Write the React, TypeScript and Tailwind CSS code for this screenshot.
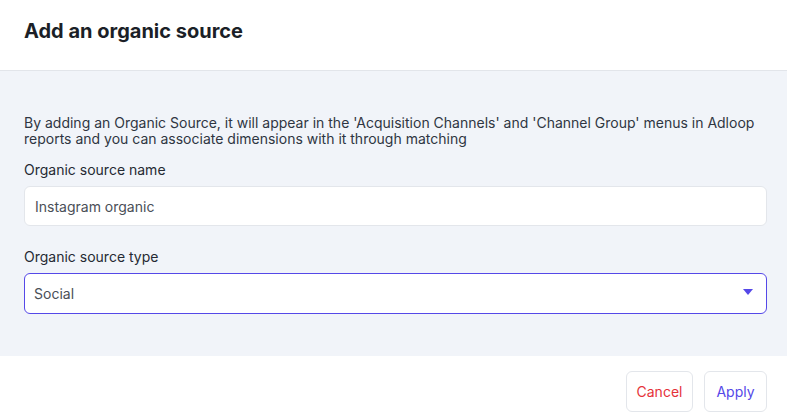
import { useState } from 'react'

export default function App() {
  const [name, setName] = useState('Instagram organic')
  const [type, setType] = useState('Social')

  return (
    <div className="w-[787px] h-[419px] bg-white font-['Inter',sans-serif] overflow-hidden">
      <div className="h-[71px] border-b border-[#e2e5ea] pl-6 pr-5 pt-[17px]">
        <h2 className="text-[20px] leading-7 font-bold text-[#1b1f27]">Add an organic source</h2>
      </div>

      <div className="bg-[#f1f4f9] pl-6 pr-5 pt-[44px] pb-[42px]">
        <p className="text-[14px] leading-4 text-[#2f3642]">
          By adding an Organic Source, it will appear in the 'Acquisition Channels' and 'Channel Group' menus in Adloop
          reports and you can associate dimensions with it through matching
        </p>

        <label className="mt-[13px] block text-[14px] leading-5 text-[#252a33]">Organic source name</label>
        <input
          value={name}
          onChange={(e) => setName(e.target.value)}
          className="mt-[6px] block h-[40px] w-full rounded-md border border-[#e3e6eb] bg-white px-[10px] text-[14px] text-[#4a4f57] outline-none"
        />

        <label className="mt-[21px] block text-[14px] leading-5 text-[#252a33]">Organic source type</label>
        <div className="relative mt-[6px]">
          <select
            value={type}
            onChange={(e) => setType(e.target.value)}
            className="block h-[41px] w-full appearance-none rounded-md border border-[#5548e8] bg-white px-[9px] text-[14px] text-[#4a4f57] outline-none"
          >
            <option>Social</option>
            <option>Search</option>
            <option>Email</option>
          </select>
          <svg
            className="pointer-events-none absolute right-[14px] top-[16px]"
            width="10"
            height="6"
            viewBox="0 0 10 6"
          >
            <path d="M0 0h10L5 6z" fill="#5548e8" />
          </svg>
        </div>
      </div>

      <div className="flex justify-end gap-[11px] pr-5 pt-[15px]">
        <button
          type="button"
          className="h-[41px] w-[67px] rounded-md border border-[#e3e6eb] bg-white text-[14px] text-[#e5323a]"
        >
          Cancel
        </button>
        <button
          type="button"
          className="h-[41px] w-[63px] rounded-md border border-[#e3e6eb] bg-white text-[14px] text-[#5548e8]"
        >
          Apply
        </button>
      </div>
    </div>
  )
}
